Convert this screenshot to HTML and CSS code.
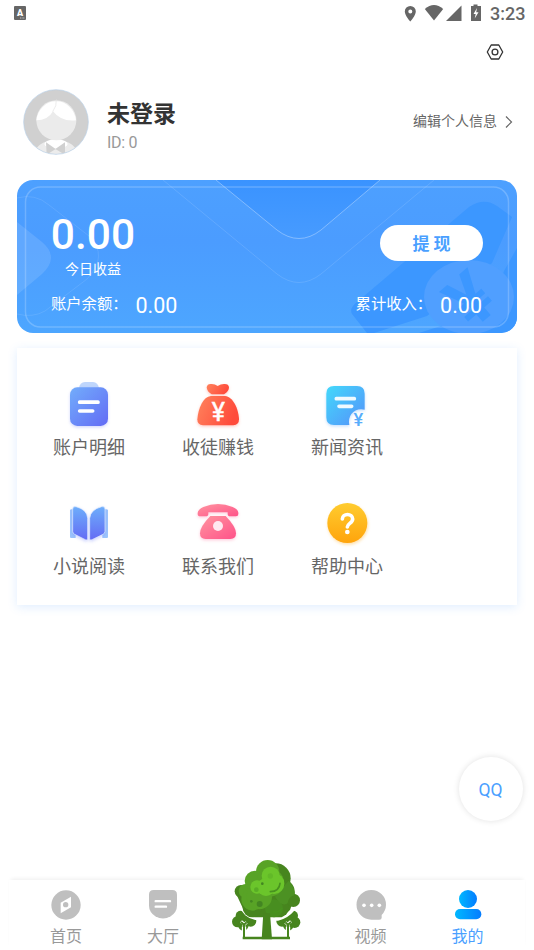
FILE: index.html
```html
<!DOCTYPE html>
<html lang="zh-CN">
<head>
<meta charset="utf-8">
<title>我的</title>
<link rel="stylesheet" href="styles.css">
</head>
<body>
<div class="screen">
  <header class="status">
    <svg class="status-app" width="12" height="14" viewBox="0 0 12 14"><rect width="12" height="14" rx="1" fill="#666"/><text x="6" y="10" text-anchor="middle" class="app-letter">A</text><path d="M6 12h5" stroke="#ddd" stroke-width=".8" stroke-dasharray="1 .6"/></svg>
    <svg width="118" height="28" viewBox="390 0 118 28" class="status-icons" fill="#666">
      <path fill-rule="evenodd" d="M410.300 6a5.500 5.500 0 0 0-5.500 5.500c0 4 5.500 10 5.500 10s5.500-6 5.500-10a5.500 5.500 0 0 0-5.500-5.500zm0 3.500a2 2 0 1 1 0 4 2 2 0 0 1 0-4z"/>
      <path d="M425 20.500 415.800 9q9.200-8 18.400 0z" transform="translate(9 0)"/>
      <path d="M461.500 5.500V21H446z"/>
      <path d="M473 4.500h4V6h3.500v15h-10V6h2.500z" transform="translate(.5 0)"/><path d="M477 8l-3.500 6h2.200l-1 4.500 3.800-6.300h-2.300z" fill="#fff"/>
    </svg>
    <time class="clock">3:23</time>
  </header>

  <div class="tools">
    <svg width="18" height="18" viewBox="0 0 18 18" fill="none" stroke="#333" stroke-width="1.300"><path d="M5.200 2h7.600l3.900 7-3.900 7H5.200L1.300 9z" stroke-linejoin="round"/><circle cx="9" cy="9" r="2.900"/></svg>
  </div>

  <section class="profile">
    <svg width="66" height="66" viewBox="69 57 198 198">
      <defs><clipPath id="av"><circle cx="168" cy="156" r="97"/></clipPath></defs>
      <circle cx="168" cy="156" r="97" fill="#d0d0d0"/>
      <g clip-path="url(#av)">
        <path d="M100 260q6-47 68-50 62 3 68 50z" fill="#ececec"/>
        <ellipse cx="168" cy="222" rx="35" ry="14" fill="#fff"/>
        <path d="M138 217l29 20-27 17zM195 217l-29 20 29 17z" fill="#d0d0d0"/>
        <circle cx="169" cy="151" r="60" fill="#ebebeb"/>
        <path d="M109 151a60 66 0 0 1 119 0q-45 5-69-27-15 27-50 27z" fill="#fff"/>
        <path d="M169 88q2 20-11 37" fill="none" stroke="#e2e2e2" stroke-width="2"/>
      </g>
      <circle cx="168" cy="156" r="97" fill="none" stroke="#b8d0e8" stroke-width="2"/>
    </svg>
    <div class="who"><h1>未登录</h1><p>ID: 0</p></div>
    <a class="edit">编辑个人信息<svg width="10" height="14" viewBox="0 0 10 14" fill="none" stroke="#666" stroke-width="1.200"><path d="M2 1.500 7.500 7 2 12.500"/></svg></a>
  </section>

  <section class="wallet">
    <svg class="wallet-bg" width="500" height="153" viewBox="0 0 500 153">
      <defs>
        <linearGradient id="wg" x2="0" y2="1"><stop stop-color="#4da0ff"/><stop offset=".4" stop-color="#4b9cff"/><stop offset="1" stop-color="#4da6ff"/></linearGradient>
        <linearGradient id="vg" x2="0" y2="1"><stop stop-color="#3a93ff"/><stop offset="1" stop-color="#479bff"/></linearGradient>
      </defs>
      <rect width="500" height="153" fill="url(#wg)"/>
      <path d="M199 0 260 50Q282 67 304 50L363 0z" fill="url(#vg)"/>
      <path d="M199 0 260 50Q282 67 304 50L363 0" fill="none" stroke="#fff" stroke-opacity=".32"/>
      <path d="M146 0 260 94Q282 111 304 94L417 0" fill="none" stroke="#fff" stroke-opacity=".12"/>
      <path d="M0 42 25 62Q43 77 25 94L0 115z" fill="#fff" fill-opacity=".12"/>
      <path d="M0 18Q18 13 32 25L72 56Q92 76 70 99L28 131Q16 138 0 134" fill="none" stroke="#fff" stroke-opacity=".1"/>
      <path d="M452 27Q467 17 480 26L495 37 475 83 410 136 357 153H350L335 134Q332 128 340 122z" fill="#3c97ff"/>
      <path d="M500 68 487 91 480 110 427 145 402 153H500z" fill="#3c97ff"/>
      <ellipse cx="452" cy="117" rx="45" ry="37" fill="#509fff"/>
      <text transform="translate(452 118) rotate(-41)" x="0" y="27" text-anchor="middle" class="big-yen">¥</text>
      <rect x="8.500" y="7" width="483" height="140" rx="15" fill="none" stroke="#fff" stroke-opacity=".2" stroke-width="1.500"/>
    </svg>
    <div class="wallet-top">
      <div class="today"><strong>0.00</strong><span>今日收益</span></div>
      <button class="withdraw">提 现</button>
    </div>
    <div class="totals">
      <div class="total"><span>账户余额：</span><b>0.00</b></div>
      <div class="total"><span>累计收入：</span><b>0.00</b></div>
    </div>
  </section>

  <section class="menu">
    <a class="item">
      <svg width="48" height="48" viewBox="165 111 144 144">
        <defs><linearGradient id="g1" x2="1" y2="1"><stop stop-color="#72adfb"/><stop offset="1" stop-color="#636bf5"/></linearGradient></defs>
        <path d="M207 140v-8q2-17 18-18h24q15 1 18 18v8z" fill="#bfd6fc"/>
        <rect class="glow-blue" x="180" y="130" width="114" height="116" rx="22" fill="url(#g1)"/>
        <path d="M209 174.500h55M209 201h39" stroke="#fff" stroke-width="11" stroke-linecap="round"/>
      </svg><span>账户明细</span></a>
    <a class="item">
      <svg width="48" height="48" viewBox="552 111 144 144">
        <defs><linearGradient id="g2" x2="1" y2=".3"><stop stop-color="#ff835d"/><stop offset="1" stop-color="#ff4b3b"/></linearGradient></defs>
        <g class="glow-red" fill="url(#g2)"><path d="M590 130q2-12 15-10 10 0 18 6 9-6 19-6 14-1 15 10 0 12-15 21h-37q-14-8-15-21z"/>
        <path d="M603 156h42c24 2 41 39 42 70q0 17-17 18h-91q-17-1-17-18c3-34 17-68 41-70z"/></g>
        <text x="625" y="231" text-anchor="middle" class="bag-yen">¥</text>
      </svg><span>收徒赚钱</span></a>
    <a class="item">
      <svg width="48" height="48" viewBox="159 111 144 144">
        <defs><linearGradient id="g3" x2="1" y2="1"><stop stop-color="#43d9fb"/><stop offset="1" stop-color="#5591fa"/></linearGradient></defs>
        <path class="glow-sky" d="M192 126h69q23 0 23 23v48q-26-5-40 13-10 14-6 33h-46q-23 0-23-23v-71q0-23 23-23z" fill="url(#g3)"/>
        <path d="M199 164h54M207 187h38" stroke="#f0faff" stroke-width="11" stroke-linecap="round"/>
        <text x="265" y="247" text-anchor="middle" class="news-yen">¥</text>
      </svg><span>新闻资讯</span></a>
    <a class="item">
      <svg width="48" height="48" viewBox="165 48 144 144">
        <defs><linearGradient id="g4" x2="0" y2="1"><stop stop-color="#6daefb"/><stop offset="1" stop-color="#646bf4"/></linearGradient></defs>
        <path d="M180 79q0-3 5-3h12v86h-14q-3 0-3-4zM294 79q0-3-5-3h-12v86h14q3 0 3-4z" fill="#9cc4fc"/>
        <g class="glow-blue" fill="url(#g4)" stroke="#e5efff" stroke-width="2"><path d="M188 75q0-9 10-7 34 9 35 35v62q-1 5-7 2l-32-16q-6-3-6-9z"/><path d="M285 75q0-9-10-7-34 9-36 35v62q1 5 7 2l33-16q6-3 6-9z"/></g>
      </svg><span>小说阅读</span></a>
    <a class="item">
      <svg width="48" height="48" viewBox="552 48 144 144">
        <defs><linearGradient id="g5" x2="1" y2="1"><stop stop-color="#ff95a0"/><stop offset="1" stop-color="#ff5289"/></linearGradient></defs>
        <g class="glow-pink" fill="url(#g5)"><path d="M563 87q1-11 17-18 44-18 88 0 16 7 17 17v4q0 7-7 7h-17q-8 0-8-8v-4h-58v4q0 8-8 8h-16q-8 0-8-8z"/>
        <path d="M601 96h46q31 32 31 52 0 17-17 17h-74q-17 0-17-17 0-20 31-52z"/></g>
        <circle cx="624" cy="126" r="15" fill="#ffe8f0"/>
      </svg><span>联系我们</span></a>
    <a class="item">
      <svg width="48" height="48" viewBox="159 48 144 144">
        <defs><linearGradient id="g6" x2="0" y2="1"><stop stop-color="#ffcc2f"/><stop offset="1" stop-color="#ffa40c"/></linearGradient></defs>
        <circle class="glow-gold" cx="232" cy="117" r="60" fill="url(#g6)"/>
        <path d="M217 105c0-18 31-18 31 0 0 13-16 13-16 24" fill="none" stroke="#fff" stroke-width="11" stroke-linecap="round"/><circle cx="232" cy="144" r="7" fill="#fff"/>
      </svg><span>帮助中心</span></a>
  </section>

  <a class="qq">QQ</a>

  <nav class="tabs">
    <a class="tab"><svg width="34" height="34" viewBox="147 114 102 102"><circle cx="198" cy="165" r="44" fill="#bfbfbf"/><path fill="#fff" d="M213 140v32l-31 18v-32z"/><circle cx="197" cy="164" r="8" fill="#bfbfbf"/></svg><span>首页</span></a>
    <a class="tab"><svg width="34" height="34" viewBox="438 114 102 102"><path d="M461 120h56q14 0 14 14v32q0 21-19 33-23 13-46 0-19-12-19-33v-32q0-14 14-14z" fill="#bfbfbf"/><path d="M467 153.500h43M467 170h31" stroke="#fff" stroke-width="7" stroke-linecap="round"/></svg><span>大厅</span></a>
    <a class="tab tree">
      <svg width="72" height="84" viewBox="93 24 216 252">
        <g fill="#47851e">
          <circle cx="113" cy="215" r="17"/><circle cx="122" cy="197" r="15"/><circle cx="152" cy="213" r="17"/><circle cx="130" cy="226" r="16"/><circle cx="134" cy="210" r="14"/>
          <circle cx="246" cy="213" r="17"/><circle cx="279" cy="197" r="15"/><circle cx="284" cy="217" r="17"/><circle cx="265" cy="226" r="16"/><circle cx="264" cy="210" r="14"/>
        </g>
        <path d="M122 160q14 37 45 42l66 2q25-4 45-28" fill="none" stroke="#fff" stroke-width="16"/>
        <g fill="#47851e"><path d="M110 135 132 182 165 202H245L270 180 286 135 200 60z"/><circle cx="123" cy="124" r="19"/><circle cx="227" cy="85" r="45"/><circle cx="246" cy="125" r="38"/><circle cx="280" cy="151" r="20"/><circle cx="157" cy="173" r="29"/><circle cx="240" cy="174" r="27"/></g>
        <circle cx="222" cy="175" r="27" fill="#488e20"/>
        <path d="M266 92q24 30 17 44-18 4-20 24-18 12-38-20z" fill="#4c9123"/>
        <g fill="#58a326"><circle cx="203" cy="65" r="35"/><circle cx="165" cy="93" r="31"/><circle cx="137" cy="123" r="21"/><circle cx="158" cy="148" r="34"/><circle cx="178" cy="140" r="38"/><circle cx="210" cy="98" r="42"/></g>
        <g fill="#6bc52b"><circle cx="212" cy="77" r="27"/><circle cx="222" cy="101" r="31"/><circle cx="171" cy="111" r="20"/><circle cx="198" cy="111" r="27"/></g>
        <path d="M211 125q27-1 29-25M220 186q15 2 25-10" fill="none" stroke="#48921f" stroke-width="5" stroke-linecap="round"/>
        <circle cx="179" cy="162" r="9" fill="#438522"/><circle cx="187" cy="101" r="4" fill="#438522"/><circle cx="169" cy="119" r="7" fill="#58ad25"/><circle cx="211" cy="78" r="8" fill="#62b928"/><circle cx="154" cy="154" r="4" fill="#438522"/>
        <path d="M132 262v-32M264 262v-32" fill="none" stroke="#fff" stroke-width="13"/>
        <path d="M132 240v-18l-9-8M132 224l8-7M264 240v-18l9-8M264 224l-8-7" fill="none" stroke="#fff" stroke-width="9"/>
        <path d="M190 190h20l6 78h-31z" fill="#47851e"/>
        <path d="M132 263v-39l-9-8M132 224l8-7M264 263v-39l9-8M264 224l-8-7" fill="none" stroke="#47851e" stroke-width="6"/>
        <path d="M128 264h142" stroke="#47851e" stroke-width="7"/>
      </svg>
    </a>
    <a class="tab"><svg width="34" height="34" viewBox="462 114 102 102"><path d="M514 120a44 44 0 0 1 44 44q0 17-13 31v8q0 6-7 6h-24a44 44 0 0 1 0-89z" fill="#bfbfbf"/><g fill="#fff"><circle cx="492" cy="166" r="5.500"/><circle cx="515" cy="166" r="5.500"/><circle cx="538" cy="166" r="5.500"/></g></svg><span>视频</span></a>
    <a class="tab active"><svg width="34" height="34" viewBox="753 114 102 102"><defs><linearGradient id="g7"><stop stop-color="#00b8ff"/><stop offset="1" stop-color="#057cff"/></linearGradient></defs><circle cx="804" cy="147" r="27" fill="url(#g7)"/><rect x="765" y="177" width="79" height="31" rx="15" fill="url(#g7)"/></svg><span>我的</span></a>
  </nav>
</div>
</body>
</html>
```
FILE: styles.css
```css
* { box-sizing: border-box; }
body { margin: 0; background: #fff; font-family: Roboto, "Noto Sans CJK SC", sans-serif; color: #666; }
h1, p { margin: 0; }
.screen { width: 534px; height: 950px; display: flex; flex-direction: column; overflow: hidden; position: relative; }

.status { height: 28px; display: flex; align-items: center; padding: 0 9px 0 14px; }
.status-app { margin-top: -2px; }
.status-icons { margin-left: auto; margin-right: -18px; }
.clock { font-size: 18px; font-weight: 500; line-height: 28px; width: 35px; white-space: nowrap; }
.app-letter { font: 900 9px Roboto, sans-serif; fill: #fff; }

.tools { height: 48px; display: flex; justify-content: flex-end; padding: 15px 30px 0 0; }

.profile { height: 104px; padding: 13px 20px 0 23px; display: flex; align-items: flex-start; }
.who { margin-left: 18px; padding-top: 9px; }
.who h1 { font-size: 23px; line-height: 34px; font-weight: 700; color: #333; }
.who p { font-size: 16px; letter-spacing: -.3px; line-height: 20px; margin-top: 1px; color: #999; }
.edit { margin-left: auto; margin-top: 22px; font-size: 14px; line-height: 20px; display: flex; align-items: center; }
.edit svg { margin: 2px 0 0 7px; }

.wallet { position: relative; height: 153px; margin: 0 17px; border-radius: 16px; overflow: hidden; color: #fff; display: flex; flex-direction: column; }
.wallet-bg { position: absolute; inset: 0; }
.big-yen { font: 700 72px Roboto, sans-serif; fill: #3c97ff; }
.wallet-top { position: relative; display: flex; justify-content: space-between; height: 107px; padding: 30px 34px 0 35px; }
.today { width: 82px; display: flex; flex-direction: column; align-items: center; }
.today strong { font-size: 42.500px; line-height: 50px; font-weight: 500; }
.today span { font-size: 14px; line-height: 20px; margin-top: -1px; }
.withdraw { width: 103px; height: 36px; margin-top: 15px; padding: 2px 0 0; border: 0; border-radius: 18px; background: #fff; color: #4a9fff; font: 700 17px/34px Roboto, "Noto Sans CJK SC", sans-serif; }
.totals { position: relative; display: flex; justify-content: space-between; padding: 0 35px 0 34px; }
.total { display: flex; }
.total span { font-size: 15.300px; line-height: 34px; }
.total b { font-size: 21.500px; line-height: 38px; font-weight: 400; margin-left: 8px; }

.menu { margin: 15px 17px 0; height: 257px; padding: 33px 0 0 7.500px; display: grid; grid-template-columns: repeat(3, 129px); grid-auto-rows: 78px; row-gap: 41px; background: #fff; box-shadow: 0 2px 9px rgba(64, 150, 255, .17); }
.item { display: flex; flex-direction: column; align-items: center; gap: 7px; }
.item svg, .tab svg { display: block; overflow: visible; }
.item span { font-size: 18px; line-height: 24px; }
.glow-blue { filter: drop-shadow(0 4px 4px rgba(100, 115, 245, .3)); }
.glow-red { filter: drop-shadow(0 4px 4px rgba(255, 80, 60, .3)); }
.glow-sky { filter: drop-shadow(0 4px 4px rgba(80, 160, 250, .35)); }
.glow-pink { filter: drop-shadow(0 4px 4px rgba(255, 85, 140, .3)); }
.glow-gold { filter: drop-shadow(2px 5px 4px rgba(255, 165, 15, .35)); }
.bag-yen { font: 400 75px Roboto, sans-serif; fill: #fff; stroke: #fff; stroke-width: 1.500px; }
.news-yen { font: 500 55px Roboto, sans-serif; fill: #58adfb; }

.qq { position: absolute; left: 458.500px; top: 756.500px; width: 64px; height: 64px; border-radius: 50%; background: #fff; box-shadow: 0 0 6px rgba(0, 0, 0, .12); color: #4a9fff; font-size: 17.500px; line-height: 66px; text-align: center; }

.tabs { margin: auto 9px 0; height: 70px; padding: 8px 0 0 8.500px; display: grid; grid-template-columns: 97px 97px 110px 98px 96px; box-shadow: 0 -3px 4px -2px rgba(0, 0, 0, .07); color: #999; }
.tab { display: flex; flex-direction: column; align-items: center; gap: 3px; }
.tab span { font-size: 16px; line-height: 24px; }
.tree { margin-top: -30px; }
.active { color: #4a9fff; }
```
